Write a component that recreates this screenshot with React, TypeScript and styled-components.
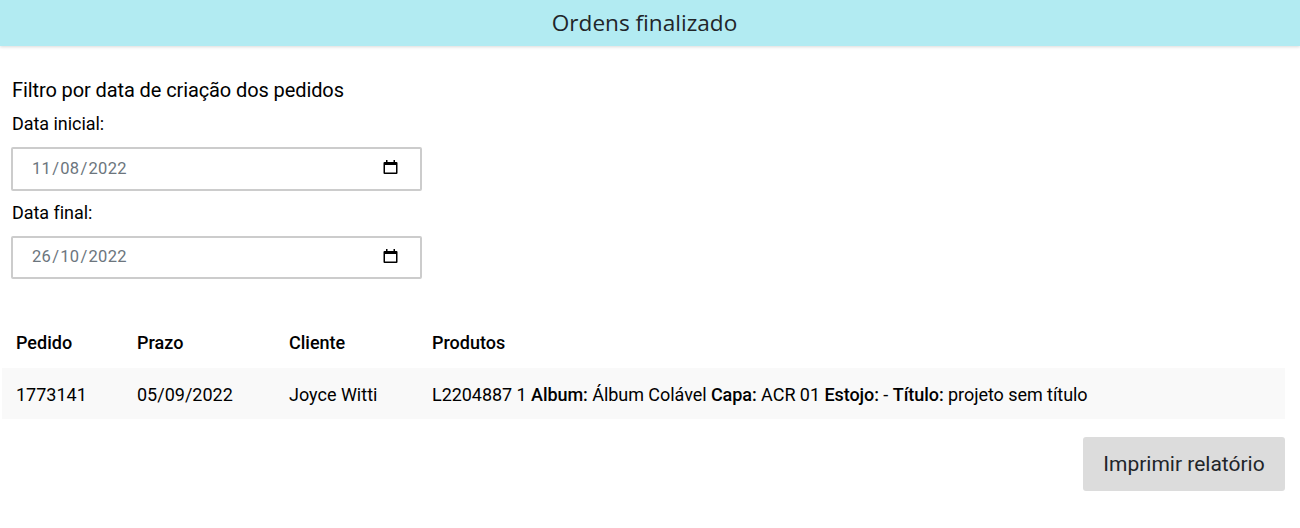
import React from 'react';
import styled, { createGlobalStyle } from 'styled-components';

const GlobalStyle = createGlobalStyle`
  html, body {
    margin: 0;
    padding: 0;
    background: #ffffff;
    font-family: Roboto, 'Liberation Sans', sans-serif;
    color: #000000;
  }
`;

const Page = styled('div')`
  width: 1300px;
  height: 528px;
  overflow: hidden;
`;

const Header = styled('header')`
  box-sizing: border-box;
  height: 46px;
  padding: 0 11px 2px 0;
  background-color: #b2ebf2;
  box-shadow: 0 1px 3px rgba(0, 0, 0, 0.15);
  display: flex;
  align-items: center;
  justify-content: center;
  font-family: 'Open Sans', sans-serif;
  font-size: 22.6px;
  color: #212529;
`;

const FilterSection = styled('section')`
  width: 411px;
  margin-left: 11px;
  padding-top: 32px;
`;

const FilterTitle = styled('div')`
  font-size: 20px;
  line-height: 24px;
  padding-left: 1px;
  letter-spacing: -0.1px;
`;

const FieldLabel = styled('label')`
  display: block;
  font-size: 18px;
  line-height: 22px;
  padding-left: 1px;
  letter-spacing: -0.05px;
`;

const FirstLabel = styled(FieldLabel)`
  margin-top: 11px;
`;

const NextLabel = styled(FieldLabel)`
  margin-top: 11px;
`;

const DateField = styled('div')<{ $height: number }>`
  box-sizing: border-box;
  height: ${(p) => p.$height}px;
  margin-top: 12px;
  padding: 0 21px 2px 19px;
  border: 2px solid #cccccc;
  border-radius: 2px;
  display: flex;
  align-items: center;
  justify-content: space-between;
  font-size: 16.5px;
  color: #6c757d;
`;

const DateText = styled('span')`
  letter-spacing: 0.3px;
`;

const Slash = styled('span')`
  margin: 0 1px;
`;

const CalendarSvg = styled('svg')`
  display: block;
  flex: none;
`;

const OrdersTable = styled('table')`
  border-collapse: collapse;
  width: 1283px;
  margin: 39px 0 0 2px;
  font-size: 18px;
  table-layout: fixed;
`;

const HeadCell = styled('th')`
  height: 48px;
  padding: 0 0 2px 14px;
  text-align: left;
  font-weight: 500;
`;

const BodyRow = styled('tr')`
  background-color: #f9f9f9;
`;

const BodyCell = styled('td')`
  height: 49px;
  padding: 2px 0 0 14px;
  font-weight: 400;
`;

const ProductCell = styled(BodyCell)`
  letter-spacing: -0.05px;
`;

const ProductKey = styled('strong')`
  font-weight: 500;
`;

const Actions = styled('div')`
  width: 1285px;
  display: flex;
  justify-content: flex-end;
  margin-top: 18px;
`;

const PrintButton = styled('button')`
  width: 202px;
  height: 54px;
  border: none;
  border-radius: 3px;
  background-color: #dcdcdc;
  color: #212529;
  font-family: Roboto, sans-serif;
  font-size: 21px;
`;

const CalendarIcon = () => (
  <CalendarSvg width="16" height="16" viewBox="0 0 16 16" aria-hidden="true">
    <path
      d="M3 0h1.5v2h6V0H12v2h1.5a1 1 0 0 1 1 1v10a1 1 0 0 1-1 1h-12a1 1 0 0 1-1-1V3a1 1 0 0 1 1-1H3V0zM2 5v7.5h11V5H2z"
      fill="#000000"
      fillRule="evenodd"
    />
  </CalendarSvg>
);

const DateInput = ({ value, height }: { value: string; height: number }) => {
  const [day, month, year] = value.split('/');
  return (
    <DateField $height={height}>
      <DateText>
        {day}
        <Slash>/</Slash>
        {month}
        <Slash>/</Slash>
        {year}
      </DateText>
      <CalendarIcon />
    </DateField>
  );
};

export default function App() {
  return (
    <Page>
      <GlobalStyle />
      <Header>Ordens finalizado</Header>
      <FilterSection>
        <FilterTitle>Filtro por data de criação dos pedidos</FilterTitle>
        <FirstLabel>Data inicial:</FirstLabel>
        <DateInput value="11/08/2022" height={44} />
        <NextLabel>Data final:</NextLabel>
        <DateInput value="26/10/2022" height={43} />
      </FilterSection>
      <OrdersTable>
        <colgroup>
          <col style={{ width: 121 }} />
          <col style={{ width: 152 }} />
          <col style={{ width: 143 }} />
          <col />
        </colgroup>
        <thead>
          <tr>
            <HeadCell>Pedido</HeadCell>
            <HeadCell>Prazo</HeadCell>
            <HeadCell>Cliente</HeadCell>
            <HeadCell>Produtos</HeadCell>
          </tr>
        </thead>
        <tbody>
          <BodyRow>
            <BodyCell>1773141</BodyCell>
            <BodyCell>05/09/2022</BodyCell>
            <BodyCell>Joyce Witti</BodyCell>
            <ProductCell>
              L2204887 1 <ProductKey>Album:</ProductKey> Álbum Colável <ProductKey>Capa:</ProductKey> ACR 01{' '}
              <ProductKey>Estojo:</ProductKey> - <ProductKey>Título:</ProductKey> projeto sem título
            </ProductCell>
          </BodyRow>
        </tbody>
      </OrdersTable>
      <Actions>
        <PrintButton>Imprimir relatório</PrintButton>
      </Actions>
    </Page>
  );
}
